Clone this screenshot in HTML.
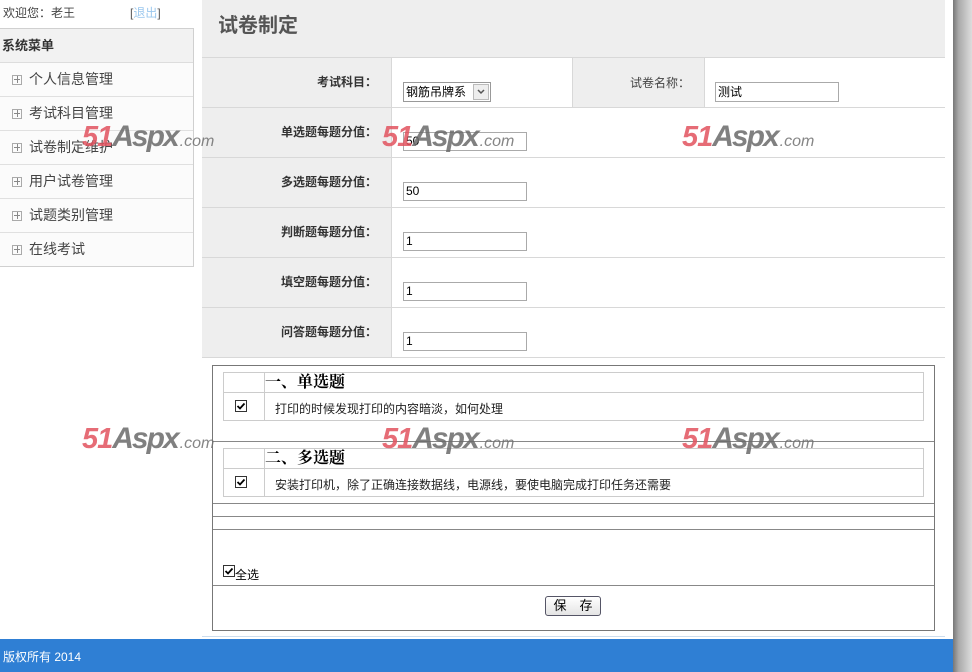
<!DOCTYPE html>
<html><head><meta charset="utf-8">
<style>
*{margin:0;padding:0;box-sizing:border-box}
body{width:972px;height:672px;overflow:hidden;background:#fff;font-family:"Liberation Sans","Noto Sans CJK SC",sans-serif;font-size:12px;color:#333;position:relative}
.a{position:absolute}
.menu{left:0;top:28px;width:194px;height:239px;border:1px solid #d0d0d0;border-left:none;background:#fbfbfb}
.mh{height:34px;background:#f2f2f2;border-bottom:1px solid #ddd;font-weight:bold;font-size:13px;line-height:34px;padding-left:2px;color:#333}
.mi{height:34px;border-bottom:1px solid #e0e0e0;line-height:33px;font-size:14px;color:#444;padding-left:12px}
.mi:last-child{border-bottom:none}
.pl{display:inline-block;width:10px;height:10px;border:1px solid #aaa;position:relative;margin-right:7px;vertical-align:-1px}
.pl:before{content:"";position:absolute;left:1px;top:3px;width:6px;height:1px;background:#888}
.pl:after{content:"";position:absolute;left:4px;top:0px;width:1px;height:7px;background:#888}
.row{left:202px;width:743px;height:50px;border-bottom:1px solid #d8d8d8}
.lab{position:absolute;left:0;top:0;width:190px;height:49px;background:#eee;text-align:right;font-weight:bold;padding-right:14px;line-height:48px;font-size:12px;border-right:1px solid #d8d8d8}
.inp{position:absolute;left:201px;top:24px;width:124px;height:19px;border:1px solid #aaa;background:#fff;font-size:12px;line-height:17px;padding-left:2px;color:#000}
.wm{position:absolute;font-style:italic;font-weight:bold;white-space:nowrap;opacity:.85}
.wm b{color:#e2535f;font-size:29px;letter-spacing:-1px}
.wm i{color:#6a6a6a;font-size:30px;font-style:italic;letter-spacing:-2px}
.wm s{text-decoration:none;color:#707070;font-size:16px;font-weight:normal;margin-left:2px}
.cb{position:absolute;width:12px;height:12px}
.qt{position:absolute;left:223px;width:701px;border:1px solid #ccc}
.sh{position:absolute;left:41px;top:0;font-size:16px;font-weight:bold;color:#000;font-family:'Liberation Serif','Noto Serif CJK SC',serif;line-height:19px}
</style></head><body>
<div class="a" style="left:3px;top:4px;font-size:12px;color:#444">欢迎您：老王</div>
<div class="a" style="left:130px;top:4px;font-size:12px;color:#555">[<span style="color:#9cc8ee">退出</span>]</div>
<div class="a menu">
<div class="mh">系统菜单</div>
<div class="mi"><span class="pl"></span>个人信息管理</div>
<div class="mi"><span class="pl"></span>考试科目管理</div>
<div class="mi"><span class="pl"></span>试卷制定维护</div>
<div class="mi"><span class="pl"></span>用户试卷管理</div>
<div class="mi"><span class="pl"></span>试题类别管理</div>
<div class="mi"><span class="pl"></span>在线考试</div>
</div>

<div class="a" style="left:202px;top:0;width:743px;height:58px;background:#eee;border-bottom:1px solid #d8d8d8"></div>
<div class="a" style="left:218px;top:9px;font-size:20px;font-weight:bold;color:#555">试卷制定</div>

<div class="a row" style="top:58px">
<div class="lab">考试科目：</div>
<div class="a" style="left:201px;top:24px;width:88px;height:20px;border:1px solid #999;background:#fff;font-size:12px;line-height:18px;padding-left:2px;color:#000">钢筋吊牌系<span style="position:absolute;right:1px;top:1px;width:16px;height:16px;border:1px solid #bbb;background:#eee"><svg width="14" height="14" viewBox="0 0 14 14"><path d="M4 5l3 3 3-3" fill="none" stroke="#555" stroke-width="1.5"/></svg></span></div>
<div class="a" style="left:370px;top:0;width:133px;height:49px;background:#eee;border-left:1px solid #d8d8d8;border-right:1px solid #d8d8d8;text-align:right;padding-right:14px;line-height:50px;color:#444">试卷名称：</div>
<div class="a" style="left:513px;top:24px;width:124px;height:20px;border:1px solid #aaa;font-size:12px;line-height:18px;padding-left:2px;color:#000">测试</div>
</div>
<div class="a row" style="top:108px"><div class="lab">单选题每题分值：</div><div class="inp">50</div></div>
<div class="a row" style="top:158px"><div class="lab">多选题每题分值：</div><div class="inp">50</div></div>
<div class="a row" style="top:208px"><div class="lab">判断题每题分值：</div><div class="inp">1</div></div>
<div class="a row" style="top:258px"><div class="lab">填空题每题分值：</div><div class="inp">1</div></div>
<div class="a row" style="top:308px"><div class="lab">问答题每题分值：</div><div class="inp">1</div></div>

<div class="a" style="left:212px;top:365px;width:723px;height:266px;border:1px solid #777"></div>
<div class="qt" style="top:372px;height:49px">
 <div class="a" style="left:40px;top:0;width:1px;height:47px;background:#ccc"></div>
 <div class="a" style="left:0;top:19px;width:699px;height:1px;background:#ccc"></div>
 <div class="sh">一、单选题</div>
 <svg class="cb" style="left:11px;top:27px" viewBox="0 0 12 12"><rect x=".5" y=".5" width="11" height="11" fill="#fff" stroke="#333"/><path d="M2.5 6l2.5 2.5 4.5-5" fill="none" stroke="#000" stroke-width="1.8"/></svg>
 <div class="a" style="left:51px;top:27px;color:#222">打印的时候发现打印的内容暗淡，如何处理</div>
</div>
<div class="a" style="left:213px;top:441px;width:721px;height:1px;background:#888"></div>
<div class="qt" style="top:448px;height:49px">
 <div class="a" style="left:40px;top:0;width:1px;height:47px;background:#ccc"></div>
 <div class="a" style="left:0;top:19px;width:699px;height:1px;background:#ccc"></div>
 <div class="sh">二、多选题</div>
 <svg class="cb" style="left:11px;top:27px" viewBox="0 0 12 12"><rect x=".5" y=".5" width="11" height="11" fill="#fff" stroke="#333"/><path d="M2.5 6l2.5 2.5 4.5-5" fill="none" stroke="#000" stroke-width="1.8"/></svg>
 <div class="a" style="left:51px;top:27px;color:#222">安装打印机，除了正确连接数据线，电源线，要使电脑完成打印任务还需要</div>
</div>
<div class="a" style="left:213px;top:503px;width:721px;height:1px;background:#888"></div>
<div class="a" style="left:213px;top:516px;width:721px;height:1px;background:#888"></div>
<div class="a" style="left:213px;top:529px;width:721px;height:1px;background:#888"></div>
<svg class="cb" style="left:223px;top:565px" viewBox="0 0 12 12"><rect x=".5" y=".5" width="11" height="11" fill="#fff" stroke="#333"/><path d="M2.5 6l2.5 2.5 4.5-5" fill="none" stroke="#000" stroke-width="1.8"/></svg>
<div class="a" style="left:235px;top:566px;color:#000">全选</div>
<div class="a" style="left:213px;top:585px;width:721px;height:1px;background:#888"></div>
<div class="a" style="left:545px;top:596px;width:56px;height:20px;border:1px solid #556;border-radius:3px;background:linear-gradient(#fff,#e4e4e4);text-align:center;line-height:18px;font-size:13px;color:#000">保　存</div>

<div class="a" style="left:202px;top:636px;width:743px;height:1px;background:#cde"></div>
<div class="a" style="left:0;top:639px;width:953px;height:33px;background:#2f7fd4"></div>
<div class="a" style="left:3px;top:648px;color:#fff;font-size:12px">版权所有 2014</div>
<div class="a" style="left:953px;top:0;width:19px;height:672px;background:linear-gradient(90deg,#777,#aaa 30%,#ddd)"></div>

<div class="wm" style="left:82px;top:120px"><b>51</b><i>Aspx</i><s>.com</s></div>
<div class="wm" style="left:382px;top:120px"><b>51</b><i>Aspx</i><s>.com</s></div>
<div class="wm" style="left:682px;top:120px"><b>51</b><i>Aspx</i><s>.com</s></div>
<div class="wm" style="left:82px;top:422px"><b>51</b><i>Aspx</i><s>.com</s></div>
<div class="wm" style="left:382px;top:422px"><b>51</b><i>Aspx</i><s>.com</s></div>
<div class="wm" style="left:682px;top:422px"><b>51</b><i>Aspx</i><s>.com</s></div>
</body></html>
